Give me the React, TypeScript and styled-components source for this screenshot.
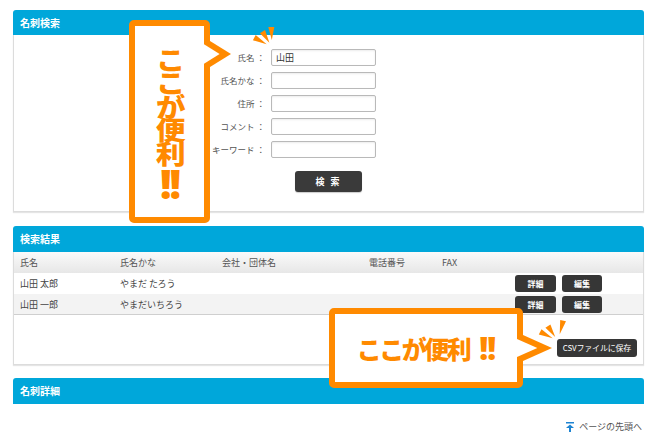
import React from "react";
import styled, { createGlobalStyle } from "styled-components";

const ORANGE = "#ff8a00";
const BLUE = "#00a7da";

const Global = createGlobalStyle`
  html, body { margin: 0; padding: 0; background: #fff; }
  body { font-family: "Noto Sans CJK JP", "Noto Sans", sans-serif; color: #444; }
  * { box-sizing: border-box; }
`;

const Page = styled.div`
  position: relative;
  width: 655px;
  height: 441px;
  padding: 10px 11px 0 13px;
  display: flex;
  flex-direction: column;
  overflow: hidden;
`;

const Panel = styled.section<{ $gap?: number }>`
  margin-top: ${(p) => p.$gap ?? 0}px;
  display: flex;
  flex-direction: column;
`;

const PanelHeader = styled.h2<{ $h: number }>`
  margin: 0;
  height: ${(p) => p.$h}px;
  background: ${BLUE};
  border-radius: 3px 3px 0 0;
  color: #fff;
  font-size: 10px;
  font-weight: 700;
  line-height: ${(p) => p.$h}px;
  padding-left: 7px;
`;

const PanelBody = styled.div`
  border: 1px solid #dcdcdc;
  border-top: 0;
  box-shadow: 0 1px 1px rgba(0, 0, 0, 0.1);
  display: flex;
  flex-direction: column;
`;

const SearchBody = styled(PanelBody)`
  padding: 14px 0 19px;
`;

const FormGrid = styled.div`
  display: grid;
  grid-template-columns: 100px 105px;
  column-gap: 6px;
  row-gap: 6px;
  margin-left: 151px;
`;

const Label = styled.label`
  font-size: 8.5px;
  color: #555;
  text-align: right;
  line-height: 17px;
  white-space: nowrap;
`;

const Input = styled.input`
  width: 105px;
  height: 17px;
  border: 1px solid #b9b9b9;
  border-radius: 2px;
  box-shadow: inset 0 1px 2px rgba(0, 0, 0, 0.08);
  font-family: inherit;
  font-size: 9px;
  color: #333;
  padding: 0 4px;
  outline: none;
`;

const DarkButton = styled.button<{ $w: number; $h: number; $size?: number; $bold?: boolean }>`
  width: ${(p) => p.$w}px;
  height: ${(p) => p.$h}px;
  background: #363636;
  border: 0;
  border-radius: 3px;
  color: #fff;
  font-family: inherit;
  font-size: ${(p) => p.$size ?? 9}px;
  font-weight: ${(p) => (p.$bold ? 700 : 400)};
  padding: 0;
  line-height: ${(p) => p.$h}px;
  white-space: nowrap;
`;

const SearchButton = styled(DarkButton)`
  margin: 13px auto 0;
  background: #3a3a3a;
  letter-spacing: 2px;
  box-shadow: 0 1px 1px rgba(0, 0, 0, 0.2);
`;

const cols = "100px 102px 147px 73px 73px auto";

const HeadRow = styled.div`
  display: grid;
  grid-template-columns: ${cols};
  align-items: center;
  height: 21px;
  padding-left: 6px;
  background: linear-gradient(#fafafa, #e7e7e7);
  font-size: 9px;
  color: #555;
`;

const Row = styled.div<{ $alt?: boolean }>`
  display: grid;
  grid-template-columns: ${cols};
  align-items: center;
  height: 21px;
  padding-left: 6px;
  background: ${(p) => (p.$alt ? "#f3f3f3" : "#fff")};
  border-bottom: ${(p) => (p.$alt ? "1px solid #cfcfcf" : "0")};
  font-size: 9px;
  color: #444;
`;

const Actions = styled.div`
  display: flex;
  gap: 6px;
`;

const ResultFooter = styled.div`
  display: flex;
  justify-content: flex-end;
  padding: 24px 6px 7px;
`;

const CsvButton = styled(DarkButton)`
  font-size: 8px;
  letter-spacing: -0.2px;
`;

const PageTop = styled.a`
  align-self: flex-end;
  margin-top: 16px;
  padding-right: 2px;
  display: flex;
  align-items: center;
  gap: 5px;
  font-size: 9px;
  color: #555;
  text-decoration: none;
`;

const CalloutBox = styled.div<{ $x: number; $y: number; $w: number; $h: number }>`
  position: absolute;
  left: ${(p) => p.$x}px;
  top: ${(p) => p.$y}px;
  width: ${(p) => p.$w}px;
  height: ${(p) => p.$h}px;
  border: 6px solid ${ORANGE};
  border-radius: 5px;
  background: #fff;
  color: ${ORANGE};
  font-weight: 900;
`;

const VerticalText = styled.div`
  display: flex;
  flex-direction: column;
  align-items: center;
  padding-top: 21px;
`;

const VWords = styled.span`
  display: block;
  writing-mode: vertical-rl;
  font-size: 26px;
  line-height: 30px;
  letter-spacing: -2.5px;
  transform: scaleX(1.15);
`;

const VBang = styled.span`
  display: block;
  margin-top: 4px;
  height: 30px;
  line-height: 30px;
  font-size: 40px;
  letter-spacing: -2px;
  font-family: "Noto Sans", sans-serif;
`;

const HorizontalText = styled.div`
  display: flex;
  align-items: center;
  justify-content: center;
  height: 100%;
  font-size: 25px;
  letter-spacing: -2.5px;
  white-space: nowrap;
`;

const HBang = styled.span`
  margin-left: 10px;
  font-size: 31px;
  letter-spacing: -1px;
  font-family: "Noto Sans", sans-serif;
`;

const Overlay = styled.svg`
  position: absolute;
  left: 0;
  top: 0;
  pointer-events: none;
`;

type Pt = [number, number];

function ray(cx: number, cy: number, deg: number, r1: number, r2: number, w: number): string {
  const a = (deg * Math.PI) / 180;
  const dx = Math.cos(a);
  const dy = Math.sin(a);
  const px = -dy;
  const py = dx;
  const pts: Pt[] = [
    [cx + dx * r1, cy + dy * r1],
    [cx + dx * r2 + (px * w) / 2, cy + dy * r2 + (py * w) / 2],
    [cx + dx * r2 - (px * w) / 2, cy + dy * r2 - (py * w) / 2],
  ];
  return pts.map((p) => p.map((v) => v.toFixed(1)).join(",")).join(" ");
}

function pointer(edgeX: number, tipX: number, cy: number, half: number, stroke: number, innerX: number) {
  const ang = Math.atan(half / (tipX - edgeX));
  const innerTip = tipX - stroke / Math.sin(ang);
  const t = Math.tan(ang);
  const outer = `${edgeX},${cy - half} ${tipX},${cy} ${edgeX},${cy + half}`;
  const ih = (innerTip - innerX) * t;
  const inner = `${innerX},${cy - ih} ${innerTip},${cy} ${innerX},${cy + ih}`;
  return { outer, inner };
}

const p1 = pointer(210, 231, 54, 13, 6, 204);
const p2 = pointer(523, 552, 348, 13, 6, 517);

export default function App() {
  return (
    <>
      <Global />
      <Page>
        <Panel>
          <PanelHeader $h={25}>名刺検索</PanelHeader>
          <SearchBody>
            <FormGrid>
              <Label>氏名 ：</Label>
              <Input readOnly defaultValue="山田" />
              <Label>氏名かな ：</Label>
              <Input readOnly />
              <Label>住所 ：</Label>
              <Input readOnly />
              <Label>コメント ：</Label>
              <Input readOnly />
              <Label>キーワード ：</Label>
              <Input readOnly />
            </FormGrid>
            <SearchButton $w={67} $h={21} $bold>
              検 索
            </SearchButton>
          </SearchBody>
        </Panel>

        <Panel $gap={14}>
          <PanelHeader $h={26}>検索結果</PanelHeader>
          <PanelBody>
            <HeadRow>
              <span>氏名</span>
              <span>氏名かな</span>
              <span>会社・団体名</span>
              <span>電話番号</span>
              <span>FAX</span>
              <span />
            </HeadRow>
            <Row>
              <span>山田 太郎</span>
              <span>やまだ たろう</span>
              <span />
              <span />
              <span />
              <Actions>
                <DarkButton $w={41} $h={17} $size={8} $bold>詳細</DarkButton>
                <DarkButton $w={40} $h={17} $size={8} $bold>編集</DarkButton>
              </Actions>
            </Row>
            <Row $alt>
              <span>山田 一郎</span>
              <span>やまだいちろう</span>
              <span />
              <span />
              <span />
              <Actions>
                <DarkButton $w={41} $h={17} $size={8} $bold>詳細</DarkButton>
                <DarkButton $w={40} $h={17} $size={8} $bold>編集</DarkButton>
              </Actions>
            </Row>
            <ResultFooter>
              <CsvButton $w={80} $h={18}>CSVファイルに保存</CsvButton>
            </ResultFooter>
          </PanelBody>
        </Panel>

        <Panel $gap={13}>
          <PanelHeader $h={26}>名刺詳細</PanelHeader>
        </Panel>

        <PageTop href="#">
          <svg width="8" height="10" viewBox="0 0 8 10">
            <rect x="0" y="0" width="8" height="1.5" fill="#1e84d2" />
            <polygon points="4,2.5 8,6 0,6" fill="#1e84d2" />
            <rect x="3" y="5.5" width="2" height="4.5" fill="#1e84d2" />
          </svg>
          ページの先頭へ
        </PageTop>

        <CalloutBox $x={129} $y={20} $w={81} $h={203}>
          <VerticalText>
            <VWords>ここが便利</VWords>
            <VBang>!!</VBang>
          </VerticalText>
        </CalloutBox>

        <CalloutBox $x={329} $y={308} $w={194} $h={80}>
          <HorizontalText>
            ここが便利<HBang>!!</HBang>
          </HorizontalText>
        </CalloutBox>

        <Overlay width={655} height={441} viewBox="0 0 655 441">
          <polygon points={p1.outer} fill={ORANGE} />
          <polygon points={p1.inner} fill="#fff" />
          <polygon points={p2.outer} fill={ORANGE} />
          <polygon points={p2.inner} fill="#fff" />
          <g fill={ORANGE}>
            <polygon points={ray(272, 47, 208, 6, 20, 6)} />
            <polygon points={ray(272, 47, 238, 5, 18, 6)} />
            <polygon points={ray(272, 47, 268, 7, 20, 6)} />
            <polygon points={ray(558, 341, 207, 6, 20, 6)} />
            <polygon points={ray(558, 341, 236, 5, 18, 6)} />
            <polygon points={ray(558, 341, 284, 7, 21, 6)} />
          </g>
        </Overlay>
      </Page>
    </>
  );
}
